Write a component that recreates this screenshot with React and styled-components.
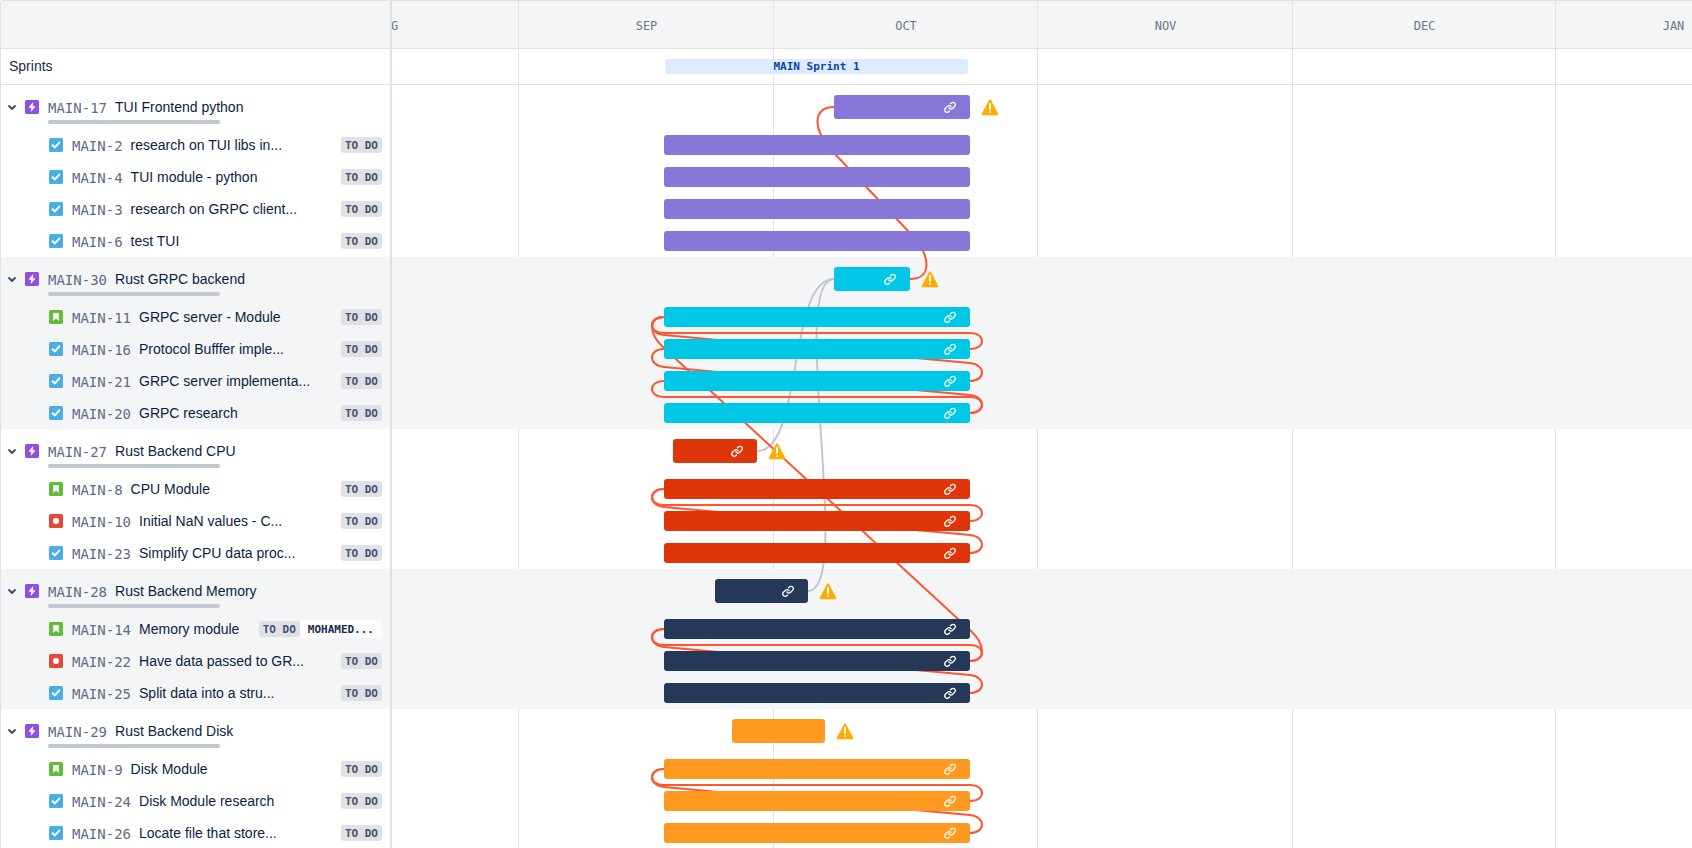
import React from "react";
import styled, { createGlobalStyle } from "styled-components";

const GlobalStyle = createGlobalStyle`
  *, *::before, *::after { box-sizing: border-box; }
  body {
    margin: 0;
    background: #fff;
    color: #172b4d;
    font-family: "Liberation Sans", Arial, sans-serif;
    font-size: 14px;
    line-height: 20px;
  }
  ul { list-style: none; margin: 0; padding: 0; }
`;

const MONO = `"DejaVu Sans Mono", "Liberation Mono", monospace`;
const LINE = "#dfe1e6";
const SIDE_WIDTH = 392;
const HEADER_HEIGHT = 48;
const SPRINT_HEIGHT = 36;
const EPIC_HEIGHT = 44;
const ISSUE_HEIGHT = 32;

const SPRINT_START = 272;
const SPRINT_WIDTH = 306;

const months = [
  { name: "AUG", width: 263 },
  { name: "SEP", width: 255 },
  { name: "OCT", width: 264 },
  { name: "NOV", width: 255 },
  { name: "DEC", width: 263 },
  { name: "JAN", width: 235 },
];

const epics = [
  {
    id: "MAIN-17", title: "TUI Frontend python", color: "#8777d9", start: 442, width: 136, linked: true,
    issues: [
      { id: "MAIN-2", title: "research on TUI libs in...", type: "task" },
      { id: "MAIN-4", title: "TUI module - python", type: "task" },
      { id: "MAIN-3", title: "research on GRPC client...", type: "task" },
      { id: "MAIN-6", title: "test TUI", type: "task" },
    ],
  },
  {
    id: "MAIN-30", title: "Rust GRPC backend", color: "#00c7e6", start: 442, width: 76, linked: true,
    issues: [
      { id: "MAIN-11", title: "GRPC server - Module", type: "story", linked: true },
      { id: "MAIN-16", title: "Protocol Bufffer imple...", type: "task", linked: true },
      { id: "MAIN-21", title: "GRPC server implementa...", type: "task", linked: true },
      { id: "MAIN-20", title: "GRPC research", type: "task", linked: true },
    ],
  },
  {
    id: "MAIN-27", title: "Rust Backend CPU", color: "#de350b", start: 281, width: 84, linked: true,
    issues: [
      { id: "MAIN-8", title: "CPU Module", type: "story", linked: true },
      { id: "MAIN-10", title: "Initial NaN values - C...", type: "bug", linked: true },
      { id: "MAIN-23", title: "Simplify CPU data proc...", type: "task", linked: true },
    ],
  },
  {
    id: "MAIN-28", title: "Rust Backend Memory", color: "#253858", start: 323, width: 93, linked: true,
    issues: [
      { id: "MAIN-14", title: "Memory module", type: "story", linked: true, assignee: "MOHAMED..." },
      { id: "MAIN-22", title: "Have data passed to GR...", type: "bug", linked: true },
      { id: "MAIN-25", title: "Split data into a stru...", type: "task", linked: true },
    ],
  },
  {
    id: "MAIN-29", title: "Rust Backend Disk", color: "#ff991f", start: 340, width: 93, linked: false,
    issues: [
      { id: "MAIN-9", title: "Disk Module", type: "story", linked: true },
      { id: "MAIN-24", title: "Disk Module research", type: "task", linked: true },
      { id: "MAIN-26", title: "Locate file that store...", type: "task", linked: true },
    ],
  },
];

const dependencies = [
  { from: "MAIN-27", to: "MAIN-30" },
  { from: "MAIN-28", to: "MAIN-30" },
  { from: "MAIN-30", to: "MAIN-17", late: true, drop: 46, bend: 22 },
  { from: "MAIN-16", to: "MAIN-11", late: true, drop: 16, bend: 16 },
  { from: "MAIN-21", to: "MAIN-11", late: true, drop: 18, bend: 16 },
  { from: "MAIN-22", to: "MAIN-11", late: true, drop: 31, bend: 16 },
  { from: "MAIN-20", to: "MAIN-16", late: true, drop: 18, bend: 16 },
  { from: "MAIN-20", to: "MAIN-21", late: true, drop: 16, bend: 16 },
  { from: "MAIN-10", to: "MAIN-8", late: true, drop: 16, bend: 16 },
  { from: "MAIN-23", to: "MAIN-8", late: true, drop: 18, bend: 16 },
  { from: "MAIN-22", to: "MAIN-14", late: true, drop: 16, bend: 16 },
  { from: "MAIN-25", to: "MAIN-14", late: true, drop: 18, bend: 16 },
  { from: "MAIN-24", to: "MAIN-9", late: true, drop: 16, bend: 16 },
  { from: "MAIN-26", to: "MAIN-9", late: true, drop: 18, bend: 16 },
];

/* Left edge, right edge and middle of every bar, used by the dependency lines. */
const anchors = {};
let cursor = 0;
epics.forEach((epic) => {
  anchors[epic.id] = { left: epic.start, right: epic.start + epic.width, y: cursor + EPIC_HEIGHT / 2 };
  cursor += EPIC_HEIGHT;
  epic.issues.forEach((issue) => {
    anchors[issue.id] = {
      left: SPRINT_START,
      right: SPRINT_START + SPRINT_WIDTH,
      y: cursor + ISSUE_HEIGHT / 2,
    };
    cursor += ISSUE_HEIGHT;
  });
});

function dependencyPath({ from, to, late, drop, bend }) {
  const x1 = anchors[from].right;
  const y1 = anchors[from].y;
  const x2 = anchors[to].left;
  const y2 = anchors[to].y;
  if (!late) return `M${x1} ${y1}C${x1 + 47} ${y1} ${x2 - 47} ${y2} ${x2} ${y2}`;
  const top = y2 + drop;
  const bottom = y1 - drop;
  const lean = ((bottom - top) / (x1 - x2)) * bend;
  return (
    `M${x1} ${y1}C${x1 + bend} ${y1} ${x1 + bend} ${bottom + lean} ${x1} ${bottom}` +
    `L${x2} ${top}C${x2 - bend} ${top - lean} ${x2 - bend} ${y2} ${x2} ${y2}`
  );
}

const Roadmap = styled.main`
  display: grid;
  grid-template-columns: ${SIDE_WIDTH}px minmax(0, 1fr);
  height: 100vh;
  overflow: hidden;
  border-top: 1px solid ${LINE};
  border-top-left-radius: 3px;
`;

const SidePane = styled.section`
  border-left: 1px solid ${LINE};
  border-right: 2px solid ${LINE};
  border-top-left-radius: 3px;
`;

const TimelinePane = styled.section`
  position: relative;
  overflow: hidden;
`;

const HeaderRow = styled.div`
  display: flex;
  height: ${HEADER_HEIGHT}px;
  background: #f4f5f7;
  border-bottom: 1px solid ${LINE};
`;

const SprintRow = styled.div`
  display: flex;
  align-items: center;
  height: ${SPRINT_HEIGHT}px;
  border-bottom: 1px solid ${LINE};
`;

const SprintHeading = styled.h2`
  margin: 0;
  padding: 0 0 2px 8px;
  font-size: 14px;
  font-weight: 400;
`;

const SprintBar = styled.div`
  position: relative;
  z-index: 2;
  flex: none;
  width: 303px;
  height: 15px;
  margin-left: 273px;
  border-radius: 3px;
  background: #deebff;
  color: #0747a6;
  font: 700 11px/16px ${MONO};
  text-align: center;
`;

const MonthTrack = styled.ul`
  display: flex;
  margin-left: -136px;
`;

const Month = styled.li`
  flex: none;
  width: ${(p) => p.$width}px;
  color: #6b778c;
  font: 400 12px/50px ${MONO};
  text-align: center;
`;

const GridLines = styled.div`
  position: absolute;
  inset: 0;
  display: flex;
  margin-left: -136px;
  pointer-events: none;
`;

const GridColumn = styled.div`
  flex: none;
  width: ${(p) => p.$width}px;
  border-right: 1px solid #e1e3e8;
`;

const Group = styled.li`
  background: ${(p) => (p.$shaded ? "#f4f5f7" : "transparent")};
`;

const EpicRow = styled.div`
  display: flex;
  height: ${EPIC_HEIGHT}px;
  padding: 10px 0 0 3px;
`;

const EpicLead = styled.div`
  display: flex;
  align-items: center;
  gap: 5px;
  width: 44px;
  height: 24px;
`;

const ToggleButton = styled.button`
  display: flex;
  align-items: center;
  justify-content: center;
  width: 16px;
  height: 24px;
  padding: 0;
  border: 0;
  background: none;
  color: #42526e;
  cursor: pointer;
`;

const EpicBody = styled.div`
  display: flex;
  flex-direction: column;
  gap: 1px;
`;

const TitleLine = styled.div`
  display: flex;
  align-items: center;
  gap: 8px;
  height: 24px;
`;

const IssueKey = styled.a`
  flex: none;
  padding-top: 2px;
  color: #5e6c84;
  font: 400 14px/20px ${MONO};
  text-decoration: none;
`;

const IssueTitle = styled.span`
  color: #091e42;
  white-space: nowrap;
`;

const Progress = styled.div`
  width: 172px;
  height: 4px;
  border-radius: 2px;
  background: #c1c7d0;
`;

const IssueRow = styled.div`
  display: flex;
  align-items: center;
  height: ${ISSUE_HEIGHT}px;
  padding: 0 8px 0 48px;
`;

const IssueText = styled.div`
  display: flex;
  align-items: center;
  flex: 1;
  gap: 8px;
  min-width: 0;
  margin-left: 9px;
`;

const Status = styled.span`
  flex: none;
  height: 16px;
  padding: 0 4px;
  border-radius: 3px;
  background: #dfe1e6;
  color: #42526e;
  font: 700 11px/17px ${MONO};
`;

const Assignee = styled.button`
  flex: none;
  height: 18px;
  padding: 2px 8px 0;
  border: 0;
  border-radius: 3px;
  background: #fcfcfd;
  color: #172b4d;
  font: 700 11px/16px ${MONO};
  cursor: pointer;
`;

const IconSvg = styled.svg`
  display: block;
  flex: none;
`;

const BarRow = styled.div`
  display: flex;
  align-items: center;
  height: ${(p) => (p.$epic ? EPIC_HEIGHT : ISSUE_HEIGHT)}px;
`;

const Bar = styled.div`
  position: relative;
  z-index: 2;
  display: flex;
  flex: none;
  align-items: center;
  justify-content: flex-end;
  width: ${(p) => p.$width}px;
  height: ${(p) => (p.$epic ? 24 : 20)}px;
  margin-left: ${(p) => p.$start}px;
  padding-right: 12px;
  border-radius: 3px;
  background: ${(p) => p.$color};
  color: #fff;
`;

const WarningSlot = styled.span`
  position: relative;
  z-index: 2;
  margin-left: 8px;
`;

const Chart = styled.div`
  position: relative;
`;

const DependencyLayer = styled.svg`
  position: absolute;
  inset: 0;
  z-index: 1;
  width: 100%;
  height: 100%;
  overflow: visible;
  pointer-events: none;
`;

const typeColors = { epic: "#904ee2", task: "#4bade8", story: "#63ba3c", bug: "#e5493a" };

function TypeIcon({ type }) {
  return (
    <IconSvg width="14" height="14" viewBox="0 0 14 14" role="img" aria-label={type}>
      <rect width="14" height="14" rx="1.6" fill={typeColors[type]} />
      {type === "epic" && <path d="M7.9 2.6 3.8 7.4h2.5L6.1 11.4l4.1-4.9H7.7z" fill="#fff" stroke="#fff" strokeWidth=".4" strokeLinejoin="round" />}
      {type === "task" && <path d="m3.6 7.3 2.2 2.1 4.5-4.9" fill="none" stroke="#fff" strokeWidth="1.9" strokeLinecap="round" strokeLinejoin="round" />}
      {type === "story" && <path d="M4.9 3h4.2c.4 0 .7.3.7.7V11L7 8.5 4.2 11V3.700c0-.4.3-.7.7-.7z" fill="#fff" />}
      {type === "bug" && <circle cx="7" cy="7" r="3" fill="#fff" />}
    </IconSvg>
  );
}

function ChevronIcon() {
  return (
    <IconSvg width="12" height="12" viewBox="0 0 12 12" aria-hidden="true">
      <path d="m3 5 3 3 3-3" fill="none" stroke="currentColor" strokeWidth="2" strokeLinecap="round" strokeLinejoin="round" />
    </IconSvg>
  );
}

function LinkIcon() {
  return (
    <IconSvg width="16" height="16" viewBox="0 0 24 24" fill="currentColor" aria-hidden="true">
      <path d="M12.856 5.457l-.937.92a1.002 1.002 0 000 1.437 1.047 1.047 0 001.463 0l.984-.966c.967-.95 2.542-1.135 3.602-.288a2.54 2.54 0 01.203 3.81l-2.903 2.852a2.646 2.646 0 01-3.696 0l-1.11-1.09L9 13.57l1.108 1.089c1.822 1.788 4.802 1.788 6.622 0l2.905-2.852a4.558 4.558 0 00-.357-6.82c-1.893-1.517-4.695-1.226-6.422.47" />
      <path d="M11.144 19.543l.937-.92a1.002 1.002 0 000-1.437 1.047 1.047 0 00-1.462 0l-.985.966c-.967.95-2.542 1.135-3.602.288a2.54 2.54 0 01-.203-3.81l2.903-2.852a2.646 2.646 0 013.696 0l1.11 1.09L15 11.43l-1.108-1.089c-1.822-1.788-4.802-1.788-6.622 0l-2.905 2.852a4.558 4.558 0 00.357 6.82c1.893 1.517 4.695 1.226 6.422-.47" />
    </IconSvg>
  );
}

function WarningIcon() {
  return (
    <IconSvg width="24" height="24" viewBox="0 0 24 24" role="img" aria-label="Date conflict">
      <path d="M12.938 4.967c-.518-.978-1.36-.974-1.876 0L3.938 18.425c-.518.978-.045 1.771 1.057 1.771h14.010c1.102 0 1.573-.797 1.057-1.771L12.938 4.967z" fill="#ffab00" />
      <path d="M12 9v5" stroke="#fff" strokeWidth="2" strokeLinecap="round" />
      <circle cx="12" cy="17" r="1" fill="#fff" />
    </IconSvg>
  );
}

function EpicGroup({ epic, shaded }) {
  return (
    <Group $shaded={shaded}>
      <EpicRow>
        <EpicLead>
          <ToggleButton type="button" aria-label={`Collapse ${epic.title}`} aria-expanded="true">
            <ChevronIcon />
          </ToggleButton>
          <TypeIcon type="epic" />
        </EpicLead>
        <EpicBody>
          <TitleLine>
            <IssueKey href={`#${epic.id}`}>{epic.id}</IssueKey>
            <IssueTitle>{epic.title}</IssueTitle>
          </TitleLine>
          <Progress />
        </EpicBody>
      </EpicRow>
      {epic.issues.map((issue) => (
        <IssueRow key={issue.id}>
          <TypeIcon type={issue.type} />
          <IssueText>
            <IssueKey href={`#${issue.id}`}>{issue.id}</IssueKey>
            <IssueTitle>{issue.title}</IssueTitle>
          </IssueText>
          <Status>TO DO</Status>
          {issue.assignee && <Assignee type="button">{issue.assignee}</Assignee>}
        </IssueRow>
      ))}
    </Group>
  );
}

function BarGroup({ epic, shaded }) {
  return (
    <Group $shaded={shaded}>
      <BarRow $epic>
        <Bar $epic $start={epic.start} $width={epic.width} $color={epic.color}>
          {epic.linked && <LinkIcon />}
        </Bar>
        <WarningSlot>
          <WarningIcon />
        </WarningSlot>
      </BarRow>
      {epic.issues.map((issue) => (
        <BarRow key={issue.id}>
          <Bar $start={SPRINT_START} $width={SPRINT_WIDTH} $color={epic.color}>
            {issue.linked && <LinkIcon />}
          </Bar>
        </BarRow>
      ))}
    </Group>
  );
}

export default function App() {
  return (
    <>
      <GlobalStyle />
      <Roadmap>
        <SidePane>
          <HeaderRow />
          <SprintRow>
            <SprintHeading>Sprints</SprintHeading>
          </SprintRow>
          <ul>
            {epics.map((epic, i) => (
              <EpicGroup key={epic.id} epic={epic} shaded={i % 2 === 1} />
            ))}
          </ul>
        </SidePane>
        <TimelinePane>
          <HeaderRow>
            <MonthTrack>
              {months.map((m) => (
                <Month key={m.name} $width={m.width}>{m.name}</Month>
              ))}
            </MonthTrack>
          </HeaderRow>
          <SprintRow>
            <SprintBar>MAIN Sprint 1</SprintBar>
          </SprintRow>
          <GridLines>
            {months.map((m) => (
              <GridColumn key={m.name} $width={m.width} />
            ))}
          </GridLines>
          <Chart>
            <DependencyLayer aria-hidden="true">
              {dependencies.map((d) => (
                <path
                  key={d.from + d.to}
                  d={dependencyPath(d)}
                  fill="none"
                  stroke={d.late ? "#ff5630" : "#c1c7d0"}
                  strokeWidth="2"
                />
              ))}
            </DependencyLayer>
            <ul>
              {epics.map((epic, i) => (
                <BarGroup key={epic.id} epic={epic} shaded={i % 2 === 1} />
              ))}
            </ul>
          </Chart>
        </TimelinePane>
      </Roadmap>
    </>
  );
}
